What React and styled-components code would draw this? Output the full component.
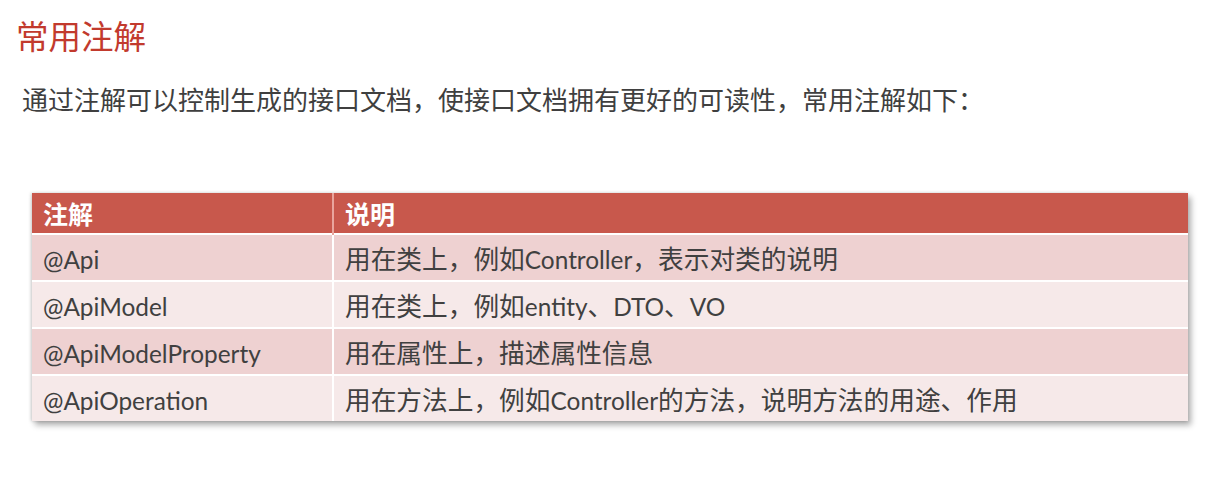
import React from "react";
import styled, { createGlobalStyle } from "styled-components";

const GlobalStyle = createGlobalStyle`
  html, body {
    margin: 0;
    padding: 0;
    background: #ffffff;
  }
  body {
    font-family: "Noto Sans", "Noto Sans CJK SC", sans-serif;
  }
`;

const Slide = styled.div`
  width: 1221px;
  height: 481px;
  box-sizing: border-box;
  padding: 15px 0 0 16px;
  background: #ffffff;
  overflow: hidden;
`;

const Title = styled.h1`
  margin: 0;
  font-family: "Noto Sans CJK SC", sans-serif;
  font-size: 32.5px;
  font-weight: 400;
  line-height: 40px;
  color: #c23a2d;
`;

const Intro = styled.p`
  margin: 27px 0 0 6px;
  font-family: "Noto Sans CJK SC", sans-serif;
  font-size: 26px;
  line-height: 34px;
  color: #3f3f3f;
`;

const Table = styled.table`
  margin: 77px 0 0 16px;
  width: 1156px;
  border-collapse: collapse;
  box-shadow: 3px 4px 6px rgba(0, 0, 0, 0.32), -1px 0 3px rgba(0, 0, 0, 0.18);
  font-family: "Noto Sans CJK SC", sans-serif;
`;

const HeadCell = styled.th`
  height: 40px;
  padding: 0 0 0 11px;
  background: #c8584c;
  color: #ffffff;
  font-size: 25px;
  font-weight: 700;
  text-align: left;
  border-left: ${(p) => (p.$first ? "none" : "2px solid #e9a59d")};
  width: ${(p) => (p.$first ? "289px" : "auto")};
`;

const Row = styled.tr`
  background: ${(p) => (p.$odd ? "#eed1d1" : "#f6e9e9")};
  border-top: 2.5px solid #ffffff;
`;

const Cell = styled.td`
  height: 45px;
  padding: 0 0 0 11px;
  font-size: 25.7px;
  color: #404040;
  border-left: ${(p) => (p.$first ? "none" : "2px solid #ffffff")};
  white-space: nowrap;
`;

// latin runs are set a touch smaller than the CJK ones, as in the slide
const Latin = styled.span`
  font-family: "Lato", sans-serif;
  font-size: 24.4px;
`;

const rows = [
  ["@Api", "用在类上，例如Controller，表示对类的说明"],
  ["@ApiModel", "用在类上，例如entity、DTO、VO"],
  ["@ApiModelProperty", "用在属性上，描述属性信息"],
  ["@ApiOperation", "用在方法上，例如Controller的方法，说明方法的用途、作用"],
];

const split = (text) =>
  text
    .split(/([A-Za-z@]+)/)
    .filter(Boolean)
    .map((part, i) =>
      /[A-Za-z@]/.test(part) ? <Latin key={i}>{part}</Latin> : part
    );

export default function App() {
  return (
    <>
      <GlobalStyle />
      <Slide>
        <Title>常用注解</Title>
        <Intro>
          通过注解可以控制生成的接口文档，使接口文档拥有更好的可读性，常用注解如下：
        </Intro>
        <Table>
          <thead>
            <tr>
              <HeadCell $first>注解</HeadCell>
              <HeadCell>说明</HeadCell>
            </tr>
          </thead>
          <tbody>
            {rows.map(([name, desc], i) => (
              <Row key={name} $odd={i % 2 === 0}>
                <Cell $first>{split(name)}</Cell>
                <Cell>{split(desc)}</Cell>
              </Row>
            ))}
          </tbody>
        </Table>
      </Slide>
    </>
  );
}
